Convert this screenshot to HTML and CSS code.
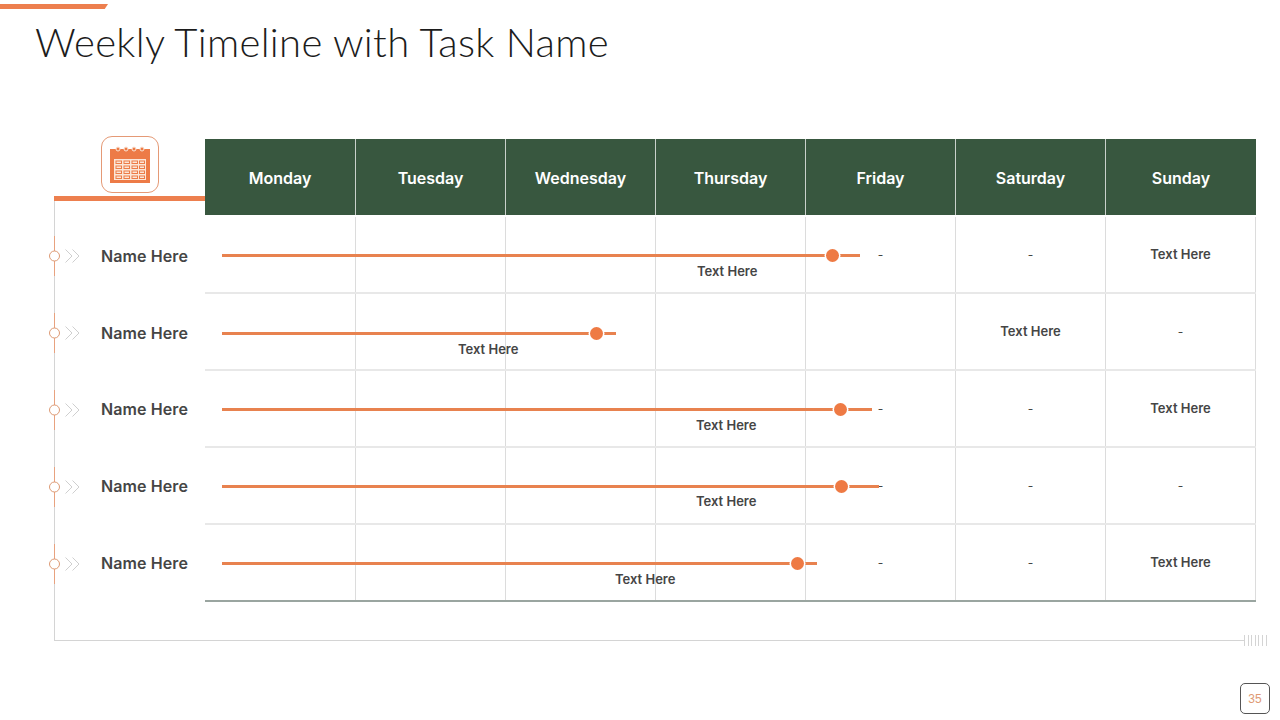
FILE: index.html
```html
<!DOCTYPE html>
<html lang="en">
<head>
<meta charset="utf-8">
<title>Weekly Timeline with Task Name</title>
<link rel="stylesheet" href="styles.css">
</head>
<body>
<div class="slide">
  <header class="top">
    <div class="accent"></div>
    <h1 class="title">Weekly Timeline with Task Name</h1>
  </header>
  <section class="board">
    <aside class="side">
      <div class="corner">
        <div class="icon-box">
          <svg class="cal" viewBox="0 0 40 37" width="40" height="37">
            <rect x="0" y="3" width="40" height="34" fill="#ed7b47"/>
            <g fill="#ed7b47" stroke="#fbe6d8" stroke-width="1"><circle cx="8" cy="3" r="2"/><circle cx="16" cy="3" r="2"/><circle cx="24" cy="3" r="2"/><circle cx="32" cy="3" r="2"/></g>
            <rect x="4" y="13" width="32" height="21" fill="#fbe6d8"/>
            <g fill="none" stroke="#ed7b47" stroke-width="1">
              <rect x="6" y="15" width="5.500" height="2.500"/><rect x="14" y="15" width="5.500" height="2.500"/><rect x="22" y="15" width="5.500" height="2.500"/><rect x="29.500" y="15" width="5" height="2.500"/>
              <rect x="6" y="20" width="5.500" height="2.500"/><rect x="14" y="20" width="5.500" height="2.500"/><rect x="22" y="20" width="5.500" height="2.500"/><rect x="29.500" y="20" width="5" height="2.500"/>
              <rect x="6" y="25" width="5.500" height="2.500"/><rect x="14" y="25" width="5.500" height="2.500"/><rect x="22" y="25" width="5.500" height="2.500"/><rect x="29.500" y="25" width="5" height="2.500"/>
              <rect x="6" y="30" width="5.500" height="2.500"/><rect x="14" y="30" width="5.500" height="2.500"/><rect x="22" y="30" width="5.500" height="2.500"/><rect x="29.500" y="30" width="5" height="2.500"/>
            </g>
          </svg>
        </div>
      </div>
      <ul class="names">
        <li class="name-row"><svg class="marker" viewBox="0 0 32 40" width="32" height="40"><path class="m-line" d="M5.500 0V40"/><circle class="m-dot" cx="5.500" cy="20" r="5"/><path class="m-chev" d="M16.500 13.500l6.500 6.500-6.500 6.500M23.500 13.500l6.500 6.500-6.500 6.500"/></svg><span class="name">Name Here</span></li>
        <li class="name-row"><svg class="marker" viewBox="0 0 32 40" width="32" height="40"><path class="m-line" d="M5.500 0V40"/><circle class="m-dot" cx="5.500" cy="20" r="5"/><path class="m-chev" d="M16.500 13.500l6.500 6.500-6.500 6.500M23.500 13.500l6.500 6.500-6.500 6.500"/></svg><span class="name">Name Here</span></li>
        <li class="name-row"><svg class="marker" viewBox="0 0 32 40" width="32" height="40"><path class="m-line" d="M5.500 0V40"/><circle class="m-dot" cx="5.500" cy="20" r="5"/><path class="m-chev" d="M16.500 13.500l6.500 6.500-6.500 6.500M23.500 13.500l6.500 6.500-6.500 6.500"/></svg><span class="name">Name Here</span></li>
        <li class="name-row"><svg class="marker" viewBox="0 0 32 40" width="32" height="40"><path class="m-line" d="M5.500 0V40"/><circle class="m-dot" cx="5.500" cy="20" r="5"/><path class="m-chev" d="M16.500 13.500l6.500 6.500-6.500 6.500M23.500 13.500l6.500 6.500-6.500 6.500"/></svg><span class="name">Name Here</span></li>
        <li class="name-row"><svg class="marker" viewBox="0 0 32 40" width="32" height="40"><path class="m-line" d="M5.500 0V40"/><circle class="m-dot" cx="5.500" cy="20" r="5"/><path class="m-chev" d="M16.500 13.500l6.500 6.500-6.500 6.500M23.500 13.500l6.500 6.500-6.500 6.500"/></svg><span class="name">Name Here</span></li>
      </ul>
    </aside>
    <div class="table">
      <div class="head">
        <div class="day">Monday</div><div class="day">Tuesday</div><div class="day">Wednesday</div><div class="day">Thursday</div><div class="day">Friday</div><div class="day">Saturday</div><div class="day">Sunday</div>
      </div>
      <div class="row">
        <div class="cell"></div><div class="cell"></div><div class="cell"></div><div class="cell"></div><div class="cell">-</div><div class="cell">-</div><div class="cell strong">Text Here</div>
        <div class="track" style="width:638px"><span class="knob" style="left:610px"></span><span class="task" style="left:475px">Text Here</span></div>
      </div>
      <div class="row">
        <div class="cell"></div><div class="cell"></div><div class="cell"></div><div class="cell"></div><div class="cell"></div><div class="cell strong">Text Here</div><div class="cell">-</div>
        <div class="track track-low" style="width:394px"><span class="knob" style="left:374px"></span><span class="task" style="left:236px">Text Here</span></div>
      </div>
      <div class="row">
        <div class="cell"></div><div class="cell"></div><div class="cell"></div><div class="cell"></div><div class="cell">-</div><div class="cell">-</div><div class="cell strong">Text Here</div>
        <div class="track" style="width:650px"><span class="knob" style="left:618px"></span><span class="task" style="left:474px">Text Here</span></div>
      </div>
      <div class="row">
        <div class="cell"></div><div class="cell"></div><div class="cell"></div><div class="cell"></div><div class="cell">-</div><div class="cell">-</div><div class="cell">-</div>
        <div class="track" style="width:657px"><span class="knob" style="left:619px"></span><span class="task task-up" style="left:474px">Text Here</span></div>
      </div>
      <div class="row">
        <div class="cell"></div><div class="cell"></div><div class="cell"></div><div class="cell"></div><div class="cell">-</div><div class="cell">-</div><div class="cell strong">Text Here</div>
        <div class="track" style="width:595px"><span class="knob" style="left:575px"></span><span class="task" style="left:393px">Text Here</span></div>
      </div>
    </div>
  </section>
  <div class="frame-foot"><span class="hatch"></span></div>
  <footer class="pager"><span class="page-no">35</span></footer>
</div>
</body>
</html>
```
FILE: styles.css
```css
* { box-sizing: border-box; }
html, body { margin: 0; padding: 0; background: #fff; }
.slide {
  width: 1280px;
  height: 720px;
  overflow: hidden;
  background: #fff;
  font-family: Inter, "Liberation Sans", sans-serif;
  color: #404040;
}
.top { height: 139px; padding-top: 4px; }
.accent {
  width: 108px;
  height: 5px;
  background: #ed7f4e;
  clip-path: polygon(0 0, 100% 0, 97% 100%, 0 100%);
}
.title {
  margin: 8px 0 0 35px;
  font-family: Lato, sans-serif;
  font-weight: 300;
  font-size: 40px;
  line-height: 50px;
  letter-spacing: 0.33px;
  color: #1c1c1c;
  white-space: nowrap;
}
.board {
  display: flex;
  margin-left: 54px;
  width: 1202px;
}
.side {
  width: 151px;
  flex: none;
  display: flex;
  flex-direction: column;
}
.corner {
  height: 62px;
  flex: none;
  display: flex;
  align-items: flex-start;
  border-bottom: 5px solid #ed7f4e;
  padding-left: 47px;
}
.icon-box {
  width: 58px;
  height: 57px;
  margin-top: -3px;
  border: 1px solid #e59a76;
  border-radius: 11px;
  background: #fff;
  display: flex;
  align-items: center;
  justify-content: center;
}
.cal { display: block; }
.names {
  flex: 1;
  list-style: none;
  margin: 0;
  padding: 15px 0 0;
  border-left: 1px solid #d4d4d4;
}
.name-row {
  height: 77px;
  padding-top: 2px;
  display: flex;
  align-items: center;
  gap: 20px;
}
.name-row:nth-child(n+3) .name { margin-top: -2px; }
.marker { flex: none; margin-left: -6px; display: block; }
.m-line { stroke: #e8a27f; stroke-width: 1; fill: none; }
.m-dot { fill: #fff; stroke: #dd9a74; stroke-width: 1; }
.m-chev { fill: none; stroke: #cfcfcf; stroke-width: 1; }
.name {
  font-size: 16px;
  font-weight: 600;
  letter-spacing: 0.1px;
  color: #454545;
  white-space: nowrap;
}
.table { width: 1051px; flex: none; }
.head {
  display: grid;
  grid-template-columns: 151px repeat(5, 150px) 150px;
  height: 78px;
  background: #38573f;
  background-clip: padding-box;
  border-bottom: 2px solid #fff;
}
.day {
  display: flex;
  align-items: center;
  justify-content: center;
  padding-top: 2px;
  color: #fff;
  font-size: 16px;
  font-weight: 600;
  border-right: 1px solid #c9d1cb;
}
.day:last-child { border-right: 0; }
.row {
  position: relative;
  display: grid;
  grid-template-columns: 151px repeat(5, 150px) 150px;
  height: 77px;
  border-bottom: 2px solid #e8e8e8;
}
.row:last-child { border-bottom-color: #9aa5a0; }
.cell {
  display: flex;
  align-items: center;
  justify-content: center;
  font-size: 12px;
  color: #454545;
  border-right: 1px solid #dcdcdc;
}
.cell:last-of-type { border-right: 0; }
.strong { font-weight: 600; font-size: 13px; padding-bottom: 2px; }
.track {
  position: absolute;
  left: 17px;
  top: 37px;
  height: 3px;
  background: #e8824f;
}
.track-low { top: 38px; }
.knob {
  position: absolute;
  top: -5px;
  width: 13px;
  height: 13px;
  margin-left: -6px;
  border-radius: 50%;
  background: #ee7a44;
  box-shadow: 0 0 0 1.500px #fff;
}
.task {
  position: absolute;
  top: 9px;
  font-size: 13px;
  font-weight: 600;
  line-height: 16px;
  white-space: nowrap;
  color: #454545;
}
.task-up { top: 8px; }
.frame-foot {
  position: relative;
  margin-left: 54px;
  width: 1190px;
  height: 39px;
  border-left: 1px solid #d4d4d4;
  border-bottom: 1px solid #d4d4d4;
}
.hatch {
  position: absolute;
  left: 100%;
  bottom: -6px;
  width: 23px;
  height: 11px;
  background: repeating-linear-gradient(90deg, #d4d4d4 0 1px, transparent 1px 3.600px);
}
.pager {
  display: flex;
  justify-content: flex-end;
  padding: 42px 10px 0 0;
}
.page-no {
  width: 30px;
  height: 31px;
  display: flex;
  align-items: center;
  justify-content: center;
  border: 1px solid #555;
  border-radius: 5px;
  font-family: "Liberation Sans", sans-serif;
  font-size: 12px;
  color: #e09a74;
}
```
